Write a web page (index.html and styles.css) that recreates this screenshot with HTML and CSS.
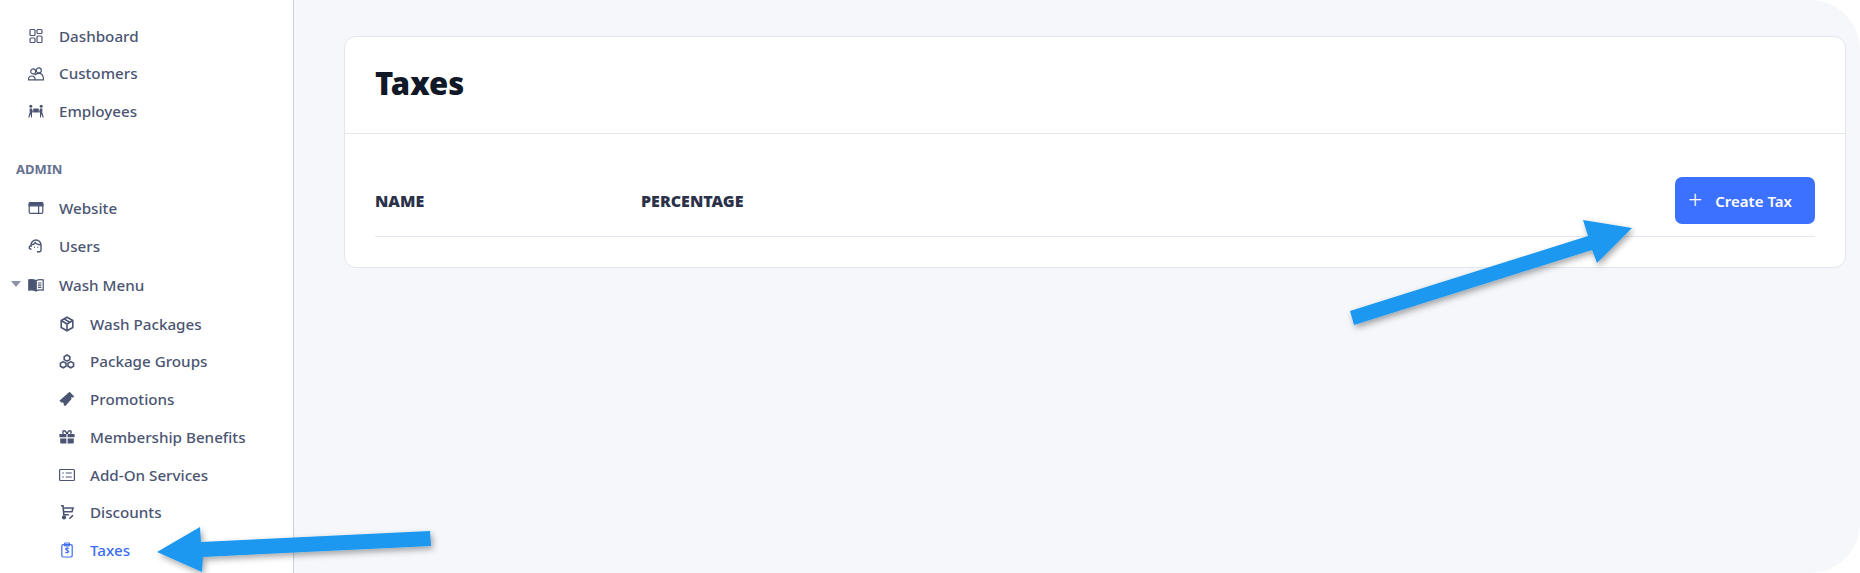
FILE: index.html
```html
<!DOCTYPE html>
<html lang="en">
<head>
    <meta charset="UTF-8">
    <meta name="viewport" content="width=device-width, initial-scale=1.0">
    <title>Taxes</title>
    <link rel="stylesheet" href="styles.css">
</head>
<body>

    <aside class="sidebar">
        <a class="nav-item">
            <svg class="nav-icon" viewBox="0 0 16 16"><rect x="2" y="1.500" width="5" height="6" rx="1"/><rect x="9" y="1.500" width="5" height="4" rx="1"/><rect x="2" y="10" width="5" height="4.500" rx="1"/><rect x="9" y="8" width="5" height="6.500" rx="1"/></svg>
            <span>Dashboard</span>
        </a>
        <a class="nav-item tight">
            <svg class="nav-icon" viewBox="0 0 16 16"><circle cx="5.200" cy="5.400" r="2.500"/><circle cx="10.800" cy="4.400" r="2.500"/><path d="M.5 13.800c0-2.400 1.500-3.800 3.400-3.800 1.900 0 3.300 1.400 3.300 3.800z"/><path d="M6.800 9.200c1-1.300 2.300-1.900 4-1.900 2.800 0 4.700 2.600 4.700 6.500H7.200"/></svg>
            <span>Customers</span>
        </a>
        <a class="nav-item">
            <svg class="nav-icon solid" viewBox="0 0 16 16"><circle cx="2.800" cy="3.300" r="1.500"/><circle cx="13.200" cy="3.300" r="1.500"/><rect x="5.200" y="5.400" width="5.600" height="4" rx=".5"/><path d="M1.600 5.400h2.200l1 2.600v1.400H4v5.200H3l-.2-3.600-1.500 3.600H.2l1.500-5.200z"/><path d="M14.400 5.400h-2.200l-1 2.600v1.400h.8v5.200h1l.2-3.600 1.500 3.600h1.100l-1.500-5.200z"/></svg>
            <span>Employees</span>
        </a>

        <div class="nav-title">ADMIN</div>

        <a class="nav-item">
            <svg class="nav-icon" viewBox="0 0 16 16"><rect x="1.200" y="2.600" width="13.600" height="10.800" rx="1.200"/><path class="fill" d="M1.200 3.600c0-.6.5-1 1-1h11.600c.5 0 1 .4 1 1v2.200H1.200z"/><path d="M10.600 6v7.200"/></svg>
            <span>Website</span>
        </a>
        <a class="nav-item">
            <svg class="nav-icon semi" viewBox="0 0 16 16"><path d="M3 9V7a5 5 0 0 1 10 0v5.200c0 1-.6 1.600-1.500 1.600H9"/><path d="M3.200 6.800C5 6.800 6.400 6 7.200 4.600c1 1.400 3 2.200 5.600 2.200"/><path d="M3 7.600c-1.200.2-1.800.9-1.800 1.800 0 1 .7 1.700 2.200 1.800"/><path d="M6 9.200h.8M9.400 9.200h.8"/></svg>
            <span>Users</span>
        </a>
        <a class="nav-item group">
            <span class="caret"></span>
            <svg class="nav-icon" viewBox="0 0 16 16"><path class="fill" d="M.8 2.800c2.600-.5 5-.3 7 .7v10.200c-2-.9-4.400-1.100-7-.6z"/><path d="M8.200 3.500c2-1 4.400-1.200 7-.7v10.300c-2.600-.5-5-.3-7 .6z"/><path d="M10 6h3.400M10 8.200h3.400M10 10.400h3.400"/></svg>
            <span>Wash Menu</span>
        </a>
        <a class="nav-item sub">
            <svg class="nav-icon bold" viewBox="0 0 16 16"><path d="M8 1.200l5.800 3.300v7L8 14.800l-5.800-3.300v-7z"/><path d="M2.200 4.500L8 8l5.800-3.500M8 8v6.800M5 2.900l5.800 3.400"/></svg>
            <span>Wash Packages</span>
        </a>
        <a class="nav-item sub tight">
            <svg class="nav-icon bold" viewBox="0 0 16 16"><path d="M8 1l2.800 1.600v3L8 7.200 5.200 5.600v-3z"/><path d="M4.200 7.600L7 9.200v3l-2.800 1.600-2.800-1.600v-3z"/><path d="M11.800 7.600l2.800 1.600v3l-2.800 1.600L9 12.200v-3z"/></svg>
            <span>Package Groups</span>
        </a>
        <a class="nav-item sub">
            <svg class="nav-icon solid" viewBox="0 0 16 16"><path d="M10.600 .8l4.600 4.600-1.400 1.400-.9-.9-1 1 .9.9-6.700 7.400-1.500-1.500c.4-.7.300-1.300-.2-1.800s-1.100-.6-1.800-.2L.4 9.700z"/></svg>
            <span>Promotions</span>
        </a>
        <a class="nav-item sub">
            <svg class="nav-icon solid" viewBox="0 0 16 16"><path d="M.4 5h7v3.200h-7zM8.600 5h7v3.200h-7zM1.200 9.400h6.200v5.200H2.400c-.7 0-1.200-.5-1.200-1.200zM8.600 9.400h6.200v4c0 .7-.5 1.200-1.200 1.200h-5z"/><path class="ribbon" d="M8 5C6.800 2 5.800 1.600 4.800 1.800 3.600 2 3.400 3.800 4.600 4.600M8 5c1.200-3 2.200-3.400 3.200-3.200 1.200.2 1.400 2 .2 2.800"/></svg>
            <span>Membership Benefits</span>
        </a>
        <a class="nav-item sub">
            <svg class="nav-icon" viewBox="0 0 16 16"><rect x=".6" y="2.500" width="14.800" height="11" rx="1"/><path d="M3.200 6h1.600M3.200 10h1.600M6.800 6h6M6.800 10h6"/></svg>
            <span>Add-On Services</span>
        </a>
        <a class="nav-item sub">
            <svg class="nav-icon bold" viewBox="0 0 16 16"><path d="M2 1.800h2l.8 9h5"/><path d="M4 4h10l-1 3.800H4.500"/><circle class="fill" cx="5" cy="13.400" r="1.300"/><path d="M10.400 14.800l3.600-3.600M10.600 11.400h.1M13.700 14.500h.1"/></svg>
            <span>Discounts</span>
        </a>
        <a class="nav-item sub active">
            <svg class="nav-icon" viewBox="0 0 16 16"><rect x="2.800" y="2.600" width="10.400" height="12.400" rx="1.400"/><rect x="5.600" y="1" width="4.800" height="2.800" rx=".6"/><text class="icon-dollar" x="8" y="12.200" text-anchor="middle">$</text></svg>
            <span>Taxes</span>
        </a>
    </aside>

    <main class="content">
        <section class="card">
            <header class="card-header">
                <h1>Taxes</h1>
            </header>
            <div class="card-body">
                <div class="table-head">
                    <div class="col-name">NAME</div>
                    <div class="col-percent">PERCENTAGE</div>
                    <button class="create-button"><span class="plus">+</span>Create Tax</button>
                </div>
            </div>
        </section>
    </main>

    <!-- callout arrows pasted on top of the screenshot -->
    <svg class="arrows" viewBox="0 0 1860 573">
        <defs>
            <filter id="arrowShadow" x="-10%" y="-30%" width="120%" height="170%">
                <feDropShadow dx="2" dy="3" stdDeviation="3" flood-color="#000" flood-opacity="0.35"/>
            </filter>
        </defs>
        <polygon filter="url(#arrowShadow)" points="157,552 200,527 201,542 430,531 431,546 203,557 202,572"/>
        <polygon filter="url(#arrowShadow)" points="1350,311 1588,236 1583,220 1632,228 1597,263 1592,250 1354,325"/>
    </svg>

</body>
</html>
```

FILE: styles.css
```css
* {
    margin: 0;
    padding: 0;
    box-sizing: border-box;
}

body {
    display: flex;
    height: 100vh;
    overflow: hidden;
    background-color: white;
    font-family: "Noto Sans", Arial, sans-serif;
}

.sidebar {
    width: 294px;
    flex-shrink: 0;
    padding-top: 17px;
    background-color: white;
    border-right: 1px solid #ccd2dc;
}

.nav-item {
    position: relative;
    display: flex;
    align-items: center;
    height: 37.7px;
    padding-left: 28px;
    font-size: 15.2px;
    font-weight: 500;
    color: #4b5573;
}

/* these two labels sit a pixel higher */
.nav-item.tight span {
    margin-top: -2px;
}

.nav-item.group {
    margin: 1.5px 0;
}

.nav-item.sub {
    padding-left: 59px;
}

.nav-item.active {
    color: #3c6cf0;
}

.nav-icon {
    width: 16px;
    height: 16px;
    margin-right: 15px;
    flex-shrink: 0;
    fill: none;
    stroke: currentColor;
    stroke-width: 1.2;
}

.nav-icon.semi {
    stroke-width: 1.4;
}

.nav-icon.bold {
    stroke-width: 1.6;
}

.nav-icon.solid {
    fill: currentColor;
    stroke: none;
}

.nav-icon .fill {
    fill: currentColor;
}

.nav-icon .ribbon {
    fill: none;
    stroke: currentColor;
    stroke-width: 1.4;
}

.icon-dollar {
    font-size: 8px;
    font-weight: 700;
    fill: currentColor;
    stroke: none;
}

.caret {
    position: absolute;
    left: 11px;
    top: 15px;
    border-left: 5px solid transparent;
    border-right: 5px solid transparent;
    border-top: 6px solid #8a93ab;
}

.nav-title {
    margin-top: 30px;
    margin-bottom: 11px;
    padding-left: 16px;
    font-size: 13px;
    line-height: 18px;
    font-weight: 700;
    color: #667190;
}

.content {
    flex: 1;
    padding: 36px 14px 0 50px;
    background-color: #f5f7fb;
    border-radius: 0 50px 50px 0;
}

.card {
    height: 232px;
    background-color: white;
    border: 1px solid #e3e6ee;
    border-radius: 12px;
}

.card-header {
    height: 97px;
    padding-left: 30px;
    padding-bottom: 4px;
    display: flex;
    align-items: center;
    border-bottom: 1px solid #e3e6ee;
}

.card-header h1 {
    font-size: 31px;
    font-weight: 900;
    color: #111827;
}

.card-body {
    padding: 0 30px;
}

.table-head {
    display: flex;
    align-items: center;
    height: 103px;
    padding-top: 31px;
    border-bottom: 1px solid #e3e6ee;
    font-size: 16px;
    font-weight: 900;
    color: #2a3249;
}

.col-name {
    width: 266px;
}

.create-button {
    display: flex;
    align-items: center;
    margin-left: auto;
    width: 140px;
    height: 47px;
    padding-left: 13px;
    border: none;
    border-radius: 7px;
    background-color: #3b71fe;
    color: white;
    font-family: inherit;
    font-size: 15px;
    font-weight: 600;
}

.plus {
    font-size: 25px;
    font-weight: 300;
    line-height: 1;
    margin-right: 13px;
    margin-top: -3px;
}

.arrows {
    position: absolute;
    left: 0;
    top: 0;
    width: 1860px;
    height: 573px;
    fill: #1b98f1;
    pointer-events: none;
}
```
